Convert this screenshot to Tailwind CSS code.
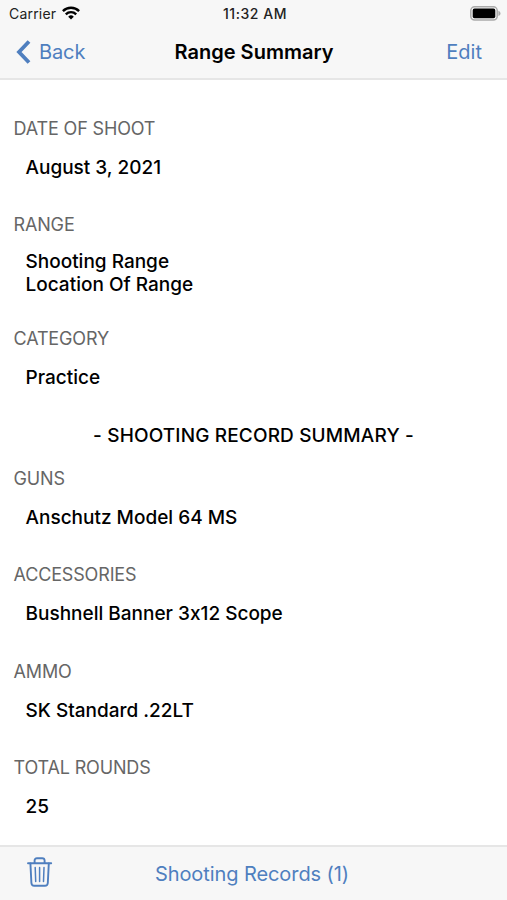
<!DOCTYPE html>
<html lang="en">
<head>
  <meta charset="UTF-8">
  <meta name="viewport" content="width=device-width, initial-scale=1.0">
  <title>Range Summary</title>
  <script src="https://cdn.jsdelivr.net/npm/@tailwindcss/browser@4"></script>
</head>
<body class="bg-white h-screen flex flex-col overflow-hidden text-black font-['Inter','Liberation_Sans',sans-serif] [font-feature-settings:'calt'_0]">

  <!-- Status bar + nav bar -->
  <header class="h-20 shrink-0 bg-[#f7f7f7] border-b-2 border-[#e6e6e6]">
    <div class="h-7 grid grid-cols-[1fr_auto_1fr] items-center pl-[9px] pr-[6px] text-[14px] text-[#222]">
      <div class="flex items-center gap-[6px] -mt-[2px]">
        <span class="tracking-[0.2px]">Carrier</span>
        <svg class="w-[18px] h-[14px] -mt-px" viewBox="0 0 18 14" fill="none" stroke="#000" stroke-width="2.4">
          <path d="M0.9 5.1a11.5 11.5 0 0 1 16.2 0" />
          <path d="M3.8 8.3a7.4 7.4 0 0 1 10.4 0" />
          <path d="M9 13.6L6.2 10.7a4 4 0 0 1 5.6 0Z" fill="#000" stroke="none" />
        </svg>
      </div>
      <span class="text-center font-medium whitespace-nowrap tracking-[0.55px] -mt-px">11:32 AM</span>
      <svg class="justify-self-end w-[31px] h-[15px] -mt-[2px]" viewBox="0 0 31 15">
        <rect x="0.8" y="0.8" width="26.4" height="13.2" rx="3.8" fill="#f7f7f7" stroke="#aaa" stroke-width="1.5" />
        <rect x="2.7" y="2.6" width="22.6" height="9.6" rx="1.8" fill="#000" />
        <path d="M28.4 4.7c2.8 1.4 2.8 4 0 5.4Z" fill="#aaa" />
      </svg>
    </div>
    <div class="h-12 grid grid-cols-[1fr_auto_1fr] items-center pl-4 pr-[25px] text-[20px] text-[#4f7fbf]">
      <a href="#" class="flex items-center gap-2">
        <svg class="w-[15px] h-6" viewBox="0 0 15 24" fill="none" stroke="#4f7fbf" stroke-width="3.8">
          <path d="M13 1.5L3 12L13 22.5" />
        </svg>
        <span class="tracking-[-0.1px]">Back</span>
      </a>
      <h1 class="pl-[10px] font-semibold text-black whitespace-nowrap">Range Summary</h1>
      <a href="#" class="justify-self-end">Edit</a>
    </div>
  </header>

  <main class="flex-1 min-h-0 pt-[36.7px] px-[13.5px] text-[19px] leading-6 font-medium">
    <section class="h-[96.5px]">
      <h2 class="text-[18px] font-normal tracking-[-0.15px] text-[#666]">DATE OF SHOOT</h2>
      <p class="pt-[15px] pl-3">August 3, 2021</p>
    </section>
    <section class="h-[113.5px]">
      <h2 class="text-[18px] font-normal tracking-[-0.15px] text-[#666]">RANGE</h2>
      <p class="pt-[12.5px] pl-3 leading-[23.3px]">Shooting Range<br>Location Of Range</p>
    </section>
    <section class="h-[96.5px]">
      <h2 class="text-[18px] font-normal tracking-[-0.15px] text-[#666]">CATEGORY</h2>
      <p class="pt-[15px] pl-3">Practice</p>
    </section>

    <h2 class="h-[43.4px] pt-[0.4px] text-center tracking-[0.15px]">- SHOOTING RECORD SUMMARY -</h2>

    <section class="h-[96.5px]">
      <h2 class="text-[18px] font-normal tracking-[-0.15px] text-[#666]">GUNS</h2>
      <p class="pt-[15px] pl-3">Anschutz Model 64 MS</p>
    </section>
    <section class="h-[96.5px]">
      <h2 class="text-[18px] font-normal tracking-[-0.15px] text-[#666]">ACCESSORIES</h2>
      <p class="pt-[15px] pl-3">Bushnell Banner 3x12 Scope</p>
    </section>
    <section class="h-[96.5px]">
      <h2 class="text-[18px] font-normal tracking-[-0.15px] text-[#666]">AMMO</h2>
      <p class="pt-[15px] pl-3">SK Standard .22LT</p>
    </section>
    <section>
      <h2 class="text-[18px] font-normal tracking-[-0.15px] text-[#666]">TOTAL ROUNDS</h2>
      <p class="pt-[15px] pl-3">25</p>
    </section>
  </main>

  <!-- Toolbar -->
  <footer class="h-[55px] shrink-0 grid grid-cols-[1fr_auto_1fr] items-center pl-[27px] pr-[30px] bg-[#f7f7f7] border-t-2 border-[#e6e6e6] text-[20px] text-[#4f7fbf]">
    <button aria-label="Delete" class="-mt-1">
      <svg class="w-[26px] h-[30px]" viewBox="0 0 26 30" fill="none" stroke="#4f7fbf" stroke-width="1.9" stroke-linecap="round" stroke-linejoin="round">
        <path d="M1 6.2H24.2" />
        <path d="M7.6 6V3.6Q7.6 1.2 10 1.2H15.2Q17.6 1.2 17.6 3.6V6" />
        <path d="M3.4 6.4L4.4 26Q4.6 28.8 7.2 28.8H18Q20.6 28.8 20.8 26L21.8 6.4" />
        <path d="M8.2 10.5L8.7 24.5M12.6 10.5V24.5M17 10.5L16.5 24.5" stroke-width="1.5" />
      </svg>
    </button>
    <a href="#" class="whitespace-nowrap tracking-[-0.08px]">Shooting Records (1)</a>
  </footer>

</body>
</html>
